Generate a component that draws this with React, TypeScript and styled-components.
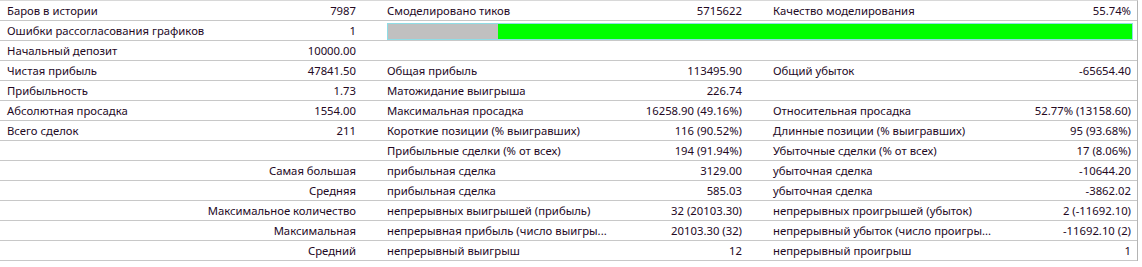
import React from "react";
import styled, { createGlobalStyle } from "styled-components";

const Global = createGlobalStyle`
  html, body { margin: 0; padding: 0; background: #ffffff; }
  body { font-family: "Noto Sans", Tahoma, sans-serif; }
`;

const Table = styled.div`
  width: 1138px;
  border-right: 1px solid #b4b4b4;
  border-top: 1px solid #d8d8d8;
  box-sizing: border-box;
`;

const Row = styled.div`
  display: grid;
  grid-template-columns: 380px 386px 371px;
  height: 20px;
  border-bottom: 1px solid #c8c8c8;
  box-sizing: border-box;
`;

const Cell = styled.div<{ $right?: number }>`
  display: flex;
  align-items: center;
  justify-content: space-between;
  padding: 0 ${(p) => p.$right ?? 24}px 0 7px;
  font-size: 11.3px;
  line-height: 19px;
  color: #24091f;
  white-space: nowrap;
  overflow: hidden;
`;

const Label = styled.span<{ $alignRight?: boolean }>`
  flex: 1;
  text-align: ${(p) => (p.$alignRight ? "right" : "left")};
`;

const Value = styled.span`
  text-align: right;
`;

const BarCell = styled.div`
  grid-column: 2 / span 2;
  display: flex;
  align-items: center;
  padding: 0 4px 0 7px;
`;

const Bar = styled.div`
  flex: 1;
  height: 17px;
  display: flex;
  border: 1px solid #8fdde6;
  box-sizing: border-box;
  margin-top: 1px;
`;

const BarPart = styled.div<{ $color: string }>`
  background: ${(p) => p.$color};
  height: 100%;
`;

type Pair = [string, string] | null;
type RowData = { cells: Pair[]; rightLabel?: boolean };

const rows: RowData[] = [
  { cells: [["Баров в истории", "7987"], ["Смоделировано тиков", "5715622"], ["Качество моделирования", "55.74%"]] },
  { cells: [["Ошибки рассогласования графиков", "1"]] },
  { cells: [["Начальный депозит", "10000.00"], null, null] },
  { cells: [["Чистая прибыль", "47841.50"], ["Общая прибыль", "113495.90"], ["Общий убыток", "-65654.40"]] },
  { cells: [["Прибыльность", "1.73"], ["Матожидание выигрыша", "226.74"], null] },
  { cells: [["Абсолютная просадка", "1554.00"], ["Максимальная просадка", "16258.90 (49.16%)"], ["Относительная просадка", "52.77% (13158.60)"]] },
  { cells: [["Всего сделок", "211"], ["Короткие позиции (% выигравших)", "116 (90.52%)"], ["Длинные позиции (% выигравших)", "95 (93.68%)"]] },
  { cells: [null, ["Прибыльные сделки (% от всех)", "194 (91.94%)"], ["Убыточные сделки (% от всех)", "17 (8.06%)"]] },
  { rightLabel: true, cells: [["Самая большая", ""], ["прибыльная сделка", "3129.00"], ["убыточная сделка", "-10644.20"]] },
  { rightLabel: true, cells: [["Средняя", ""], ["прибыльная сделка", "585.03"], ["убыточная сделка", "-3862.02"]] },
  { rightLabel: true, cells: [["Максимальное количество", ""], ["непрерывных выигрышей (прибыль)", "32 (20103.30)"], ["непрерывных проигрышей (убыток)", "2 (-11692.10)"]] },
  { rightLabel: true, cells: [["Максимальная", ""], ["непрерывная прибыль (число выигры...", "20103.30 (32)"], ["непрерывный убыток (число проигры...", "-11692.10 (2)"]] },
  { rightLabel: true, cells: [["Средний", ""], ["непрерывный выигрыш", "12"], ["непрерывный проигрыш", "1"]] },
];

export default function App() {
  return (
    <>
      <Global />
      <Table>
        {rows.map((r, i) => (
          <Row key={i}>
            {r.cells.map((c, j) => (
              <Cell key={j} $right={j === 2 ? 6 : 24}>
                {c && (
                  <>
                    <Label $alignRight={r.rightLabel && j === 0}>{c[0]}</Label>
                    {c[1] && <Value>{c[1]}</Value>}
                  </>
                )}
              </Cell>
            ))}
            {i === 1 && (
              <BarCell>
                <Bar>
                  <BarPart $color="#c0c0c0" style={{ width: "14.8%" }} />
                  <BarPart $color="#00ff00" style={{ flex: 1 }} />
                </Bar>
              </BarCell>
            )}
          </Row>
        ))}
      </Table>
    </>
  );
}
